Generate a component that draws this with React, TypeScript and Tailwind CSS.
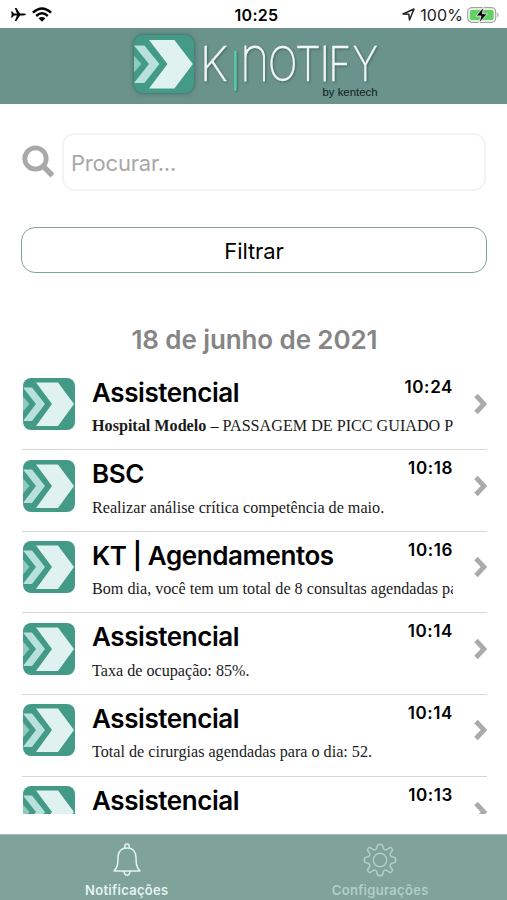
import React from 'react';

type Item = { title: string; time: string; body: React.ReactNode };

const items: Item[] = [
  { title: 'Assistencial', time: '10:24', body: <><b>Hospital Modelo</b> – PASSAGEM DE PICC GUIADO P</> },
  { title: 'BSC', time: '10:18', body: 'Realizar análise crítica competência de maio.' },
  { title: 'KT | Agendamentos', time: '10:16', body: 'Bom dia, você tem um total de 8 consultas agendadas pa' },
  { title: 'Assistencial', time: '10:14', body: 'Taxa de ocupação: 85%.' },
  { title: 'Assistencial', time: '10:14', body: 'Total de cirurgias agendadas para o dia: 52.' },
  { title: 'Assistencial', time: '10:13', body: '' },
];

function Mark({ className }: { className: string }) {
  return (
    <svg viewBox="0 0 52 52" className={className} preserveAspectRatio="none">
      <path d="M0 18.5 6.5 26 0 33.5Z" fill="#8fcbbb" />
      <path d="M0 9.5H9L22 26 9 43H0L13 26Z" fill="#b9e1db" />
      <path d="M13 4.5H35L51 26 35 48H13L29 26Z" fill="#dff2f0" />
    </svg>
  );
}

type Letter = { ch: string; x: number; w: number; y: number; size: number; fill: string; weight: number; stroke: number };

const letters: Letter[] = [
  { ch: 'K', x: 200, w: 28, y: 81, size: 47.5, fill: '#f2f7f6', weight: 200, stroke: 0.3 },
  { ch: '|', x: 230, w: 10.5, y: 83, size: 33, fill: '#55cfae', weight: 300, stroke: 0.5 },
  { ch: 'n', x: 240, w: 29.5, y: 81, size: 63, fill: '#f2f7f6', weight: 100, stroke: 1 },
  { ch: 'O', x: 268, w: 29.5, y: 81, size: 47, fill: '#f2f7f6', weight: 200, stroke: 0.3 },
  { ch: 'T', x: 295, w: 26, y: 81, size: 47.5, fill: '#f2f7f6', weight: 200, stroke: 0.3 },
  { ch: 'I', x: 320.5, w: 8.5, y: 81, size: 47.5, fill: '#f2f7f6', weight: 200, stroke: 1 },
  { ch: 'F', x: 328.5, w: 22.5, y: 81, size: 47.5, fill: '#f2f7f6', weight: 200, stroke: 0.5 },
  { ch: 'Y', x: 352.5, w: 25.5, y: 81, size: 47.5, fill: '#f2f7f6', weight: 200, stroke: 0.3 },
];

function Wordmark() {
  return (
    <svg viewBox="199 28 182 76" className="h-[76px] w-[182px]">
      <g className="drop-shadow-[1px_1px_1px_rgba(30,60,55,0.5)]">
        {letters.map((l) => (
          <text
            key={l.ch}
            x={l.x}
            y={l.y}
            fontSize={l.size}
            textLength={l.w}
            lengthAdjust="spacingAndGlyphs"
            fill={l.fill}
            stroke={l.fill}
            strokeWidth={l.stroke}
            fontFamily="Inter, sans-serif"
            fontWeight={l.weight}
          >
            {l.ch}
          </text>
        ))}
      </g>
      <text x="322.5" y="96" fontSize="10.5" textLength="55" lengthAdjust="spacingAndGlyphs" fill="#101c1a" fontFamily="Liberation Sans, Arial, sans-serif">by kentech</text>
    </svg>
  );
}

function StatusBar() {
  return (
    <div className="flex h-[28px] shrink-0 items-center bg-white pt-px">
      <div className="flex flex-1 items-center gap-[6px] pl-[11px]">
        <svg viewBox="0 0 15 13" className="h-[13px] w-[15px]">
          <path d="M0 3.5H1.3L3 5.6H6L3.8 0H5.4L9 5.6H12.5Q15 5.8 15 6.5T12.5 7.4H9L5.4 13H3.8L6 7.4H3L1.3 9.5H0L.8 6.5Z" />
        </svg>
        <svg viewBox="0 0 20 15" className="h-[15px] w-[20px]" fill="none" stroke="#000" strokeWidth="2.5">
          <path d="M.9 5.7Q10-2.8 19.1 5.7M4.2 9Q10 3.6 15.8 9" />
          <path d="M6.6 11.3Q10 8.5 13.4 11.3L10 14.7Z" fill="#000" stroke="none" />
        </svg>
      </div>
      <div className="-mr-px ml-px text-[16px] font-semibold tracking-[0.3px]">10:25</div>
      <div className="flex flex-1 items-center justify-end pr-[7px]">
        <svg viewBox="0 0 13 13" className="mr-[5px] h-[13px] w-[13px]" fill="none" stroke="#222" strokeWidth="1.5" strokeLinejoin="round">
          <path d="M1 6 12 1 7.5 12 6.8 6.3Z" />
        </svg>
        <span className="mr-[4px] text-[16px] tracking-[0.1px] text-[#222]">100%</span>
        <svg viewBox="0 0 33 18" className="h-[18px] w-[33px]">
          <rect x=".7" y="1.7" width="28" height="14.6" rx="4.4" fill="#fff" stroke="#a2a2a2" strokeWidth="1.2" />
          <rect x="2.7" y="3.7" width="24" height="10.6" rx="2.6" fill="#63d165" />
          <path d="M30.4 6.4Q33 9 30.4 11.6Z" fill="#a2a2a2" />
          <path d="M16.6 1 9 10H14L12 17 20.4 7.8H15.4Z" fill="#000" stroke="#fff" strokeWidth=".8" />
        </svg>
      </div>
    </div>
  );
}

function Row({ item }: { item: Item }) {
  return (
    <div className="flex h-[81.6px] shrink-0 border-b border-[#d7d7d7]">
      <div className="mt-[9.5px] ml-px h-[52px] w-[52px] shrink-0 overflow-hidden rounded-[8px] bg-[#439b87]">
        <Mark className="h-full w-full" />
      </div>
      <div className="ml-[17px] w-[361px] shrink-0">
        <div className="flex justify-between">
          <div className="mt-[8px] text-[26px] leading-[32px] font-semibold tracking-[-0.42px] whitespace-nowrap">{item.title}</div>
          <div className="mt-[8px] text-[17px] leading-[21px] font-semibold tracking-[0.6px]">{item.time}</div>
        </div>
        <div className="mt-[7.5px] overflow-hidden font-['Liberation_Serif',serif] text-[16.15px] leading-[20px] whitespace-nowrap text-[#1a1a1a]">{item.body}</div>
      </div>
      <svg viewBox="0 0 13 22" className="mt-[24.5px] ml-[21px] h-[22px] w-[13px] shrink-0" fill="none" stroke="#ababab" strokeWidth="4.8">
        <path d="M2 2.5 10 11 2 19.5" />
      </svg>
    </div>
  );
}

export default function App() {
  return (
    <div className="flex h-[900px] w-[507px] flex-col overflow-hidden bg-white font-['Inter',sans-serif] text-black">
      <StatusBar />
      <header className="flex h-[76px] shrink-0 items-start bg-[#6a938b] pl-[134px]">
        <div className="mt-[7px] mr-[5px] h-[58px] w-[60px] overflow-hidden rounded-[9px] bg-[#439b87] shadow-[0_0_4px_rgba(30,70,60,0.7)]">
          <Mark className="h-full w-full" />
        </div>
        <Wordmark />
      </header>
      <main className="flex h-[710px] shrink-0 flex-col overflow-hidden pr-[20px] pl-[22px]">
        <div className="mt-[29px] flex h-[58px] shrink-0 items-center">
          <svg viewBox="0 0 32 33" className="-mt-[2px] h-[33px] w-[32px]" fill="none" stroke="#a9a9a9">
            <circle cx="13.5" cy="13.5" r="10.7" strokeWidth="4.8" />
            <path d="M22 22 30.5 30.5" strokeWidth="5.4" />
          </svg>
          <div className="ml-[8px] flex h-[58px] w-[424px] items-center rounded-[12px] border-2 border-[#f3f3f3] pt-[2px] pl-[7px] text-[22px] tracking-[-0.2px] text-[#a8a8a8]">Procurar...</div>
        </div>
        <button className="mt-[36px] -ml-px flex h-[46px] w-[466px] shrink-0 items-center justify-center rounded-[14px] border-[1.5px] border-[#7da69b] pt-[2px] text-[22px] tracking-[-0.1px]">Filtrar</button>
        <h2 className="mt-[51px] h-[44.6px] shrink-0 text-center text-[26px] leading-[32px] font-semibold tracking-[-0.1px] text-[#858585]">18 de junho de 2021</h2>
        {items.map((item, i) => <Row key={i} item={item} />)}
      </main>
      <nav className="mt-auto flex h-[66px] shrink-0 border-t border-[#a9bfba] bg-[#7fa29b] text-[13px] font-semibold tracking-[0.3px]">
        <div className="flex flex-1 flex-col items-center text-[#e5f4f0]">
          <svg viewBox="0 0 28 34" className="mt-[8px] h-[34px] w-[28px]" fill="none" stroke="currentColor" strokeWidth="1.5" strokeLinejoin="round">
            <path d="M11.8 5.3V3.4Q11.8 1 14 1T16.2 3.4V5.3M14 5Q22.5 5 23 14C23.1 21.5 23.5 24.5 27 28H1C4.5 24.5 4.9 21.5 5 14Q5.5 5 14 5ZM11 28.3Q11.3 32.3 14 32.3T17 28.3" />
          </svg>
          <span className="mt-[4px] leading-[18px]">Notificações</span>
        </div>
        <div className="flex flex-1 flex-col items-center text-[#b1cec6]">
          <svg viewBox="0 0 34 34" className="mt-[8px] h-[34px] w-[34px]" fill="none" stroke="currentColor" strokeWidth="1.5" strokeLinejoin="round">
            <circle cx="17" cy="17" r="6.7" />
            <path d="M14 3.5Q14.6 1.2 17 1.2T20 3.5L20.3 5.4Q21.9 8 24.3 6.2L26 5Q27.6 4 28.8 5.2T29 8L27.8 9.7Q26 12.1 28.6 13.7L30.5 14Q32.8 14.6 32.8 17T30.5 20L28.6 20.3Q26 21.9 27.8 24.3L29 26Q30 27.6 28.8 28.8T26 29L24.3 27.8Q21.9 26 20.3 28.6L20 30.5Q19.4 32.8 17 32.8T14 30.5L13.7 28.6Q12.1 26 9.7 27.8L8 29Q6.4 30 5.2 28.8T5 26L6.2 24.3Q8 21.9 5.4 20.3L3.5 20Q1.2 19.4 1.2 17T3.5 14L5.4 13.7Q8 12.1 6.2 9.7L5 8Q4 6.4 5.2 5.2T8 5L9.7 6.2Q12.1 8 13.7 5.4Z" />
          </svg>
          <span className="mt-[4px] leading-[18px]">Configurações</span>
        </div>
      </nav>
    </div>
  );
}
